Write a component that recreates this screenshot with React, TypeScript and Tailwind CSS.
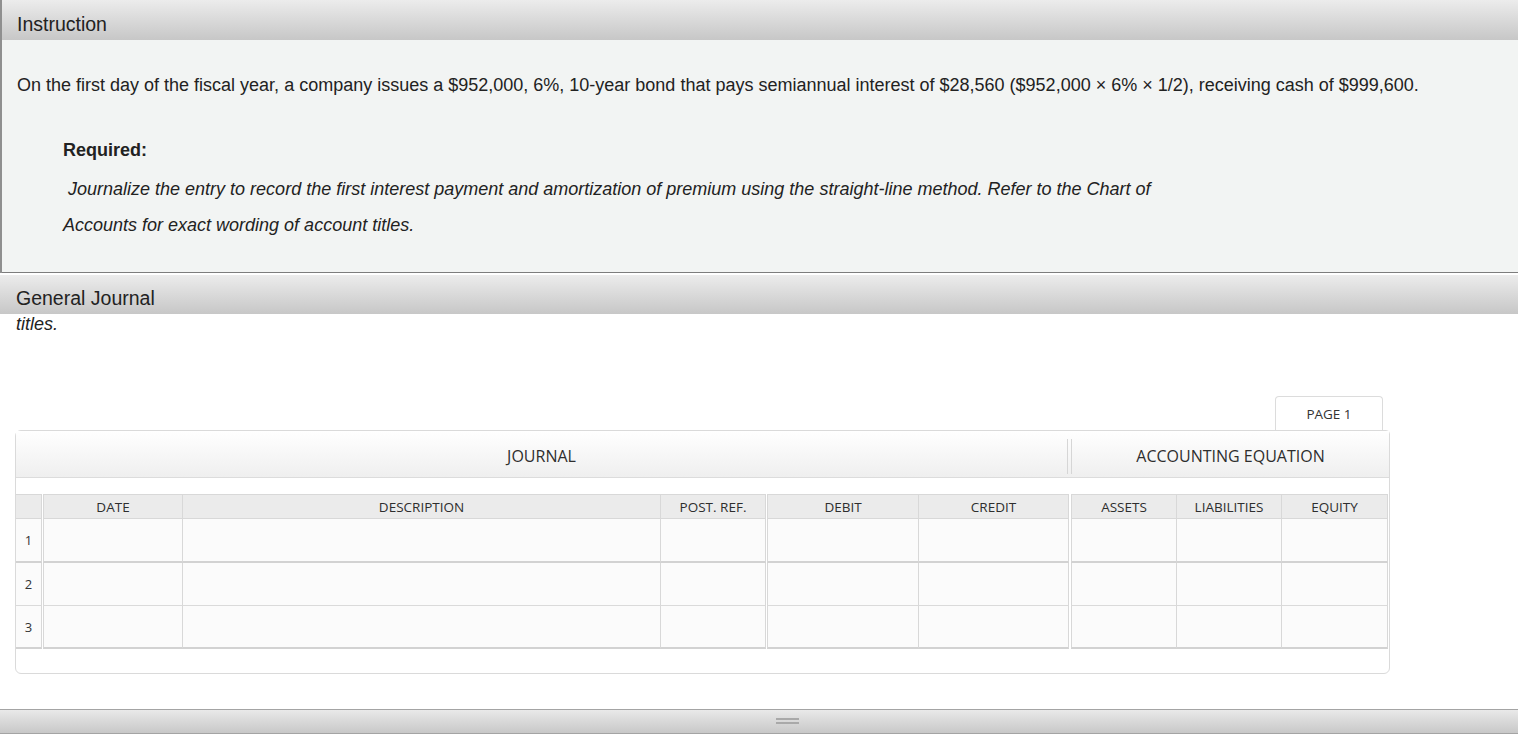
import type { ReactNode } from 'react';

const cellBorder = 'border-[#d8d8d8]';

function HeadCell({ w, children, first }: { w: string; children?: ReactNode; first?: boolean }) {
  return (
    <div
      className={`${w} h-[25px] flex items-center justify-center pt-[1px] border-t border-b border-r ${cellBorder} bg-[#ebebeb] text-[13.5px] text-[#2e2e2e] ${first ? 'border-l' : ''}`}
    >
      {children}
    </div>
  );
}

function BodyCell({ w, h, b, first, children }: { w: string; h: string; b: string; first?: boolean; children?: ReactNode }) {
  return (
    <div
      className={`${w} ${h} ${b} flex items-center justify-center pt-[2px] border-r ${cellBorder} bg-[#fbfbfb] text-[13px] text-[#333] ${first ? 'border-l' : ''}`}
    >
      {children}
    </div>
  );
}

const rows = [
  { n: 1, h: 'h-[44px]', b: 'border-b-2 border-b-[#d2d2d2]' },
  { n: 2, h: 'h-[43px]', b: 'border-b border-b-[#dadada]' },
  { n: 3, h: 'h-[43px]', b: 'border-b-2 border-b-[#d2d2d2]' },
];

function JournalTable() {
  return (
    <div className="font-['Open_Sans',sans-serif]">
      <div className="flex">
        <HeadCell w="w-[26px]" />
        <div className="w-px" />
        <HeadCell w="w-[140px]" first>DATE</HeadCell>
        <HeadCell w="w-[478px]">DESCRIPTION</HeadCell>
        <HeadCell w="w-[105px]">POST. REF.</HeadCell>
        <div className="w-px" />
        <HeadCell w="w-[152px]" first>DEBIT</HeadCell>
        <HeadCell w="w-[150px]">CREDIT</HeadCell>
        <div className="w-[2px]" />
        <HeadCell w="w-[106px]" first>ASSETS</HeadCell>
        <HeadCell w="w-[105px]">LIABILITIES</HeadCell>
        <HeadCell w="w-[106px]">EQUITY</HeadCell>
      </div>
      {rows.map((r) => (
        <div key={r.n} className="flex">
          <BodyCell w="w-[26px]" h={r.h} b={r.b}>{r.n}</BodyCell>
          <div className="w-px" />
          <BodyCell w="w-[140px]" h={r.h} b={r.b} first />
          <BodyCell w="w-[478px]" h={r.h} b={r.b} />
          <BodyCell w="w-[105px]" h={r.h} b={r.b} />
          <div className="w-px" />
          <BodyCell w="w-[152px]" h={r.h} b={r.b} first />
          <BodyCell w="w-[150px]" h={r.h} b={r.b} />
          <div className="w-[2px]" />
          <BodyCell w="w-[106px]" h={r.h} b={r.b} first />
          <BodyCell w="w-[105px]" h={r.h} b={r.b} />
          <BodyCell w="w-[106px]" h={r.h} b={r.b} />
        </div>
      ))}
    </div>
  );
}

export default function App() {
  return (
    <div className="w-[1518px] h-[741px] overflow-hidden bg-white font-['Liberation_Sans',Arial,sans-serif] text-[#222]">
      <section className="border-l-2 border-[#8f8f8f]">
        <div className="h-[40px] bg-linear-to-b from-[#ececec] to-[#c7c7c7] pl-[15px] pt-[15px] text-[19.5px] leading-[19px]">
          Instruction
        </div>
        <div className="h-[233px] border-b border-[#7d7d7d] bg-[#f2f4f3] pl-[15px] pt-[35px]">
          <p className="text-[18px] leading-[20px]">
            On the first day of the fiscal year, a company issues a $952,000, 6%, 10-year bond that pays semiannual
            interest of $28,560 ($952,000 × 6% × 1/2), receiving cash of $999,600.
          </p>
          <div className="ml-[46px]">
            <p className="mt-[45px] text-[18px] font-bold leading-[20px]">Required:</p>
            <p className="mt-[11px] text-[18px] italic leading-[36px]">
              {'\u00a0'}Journalize the entry to record the first interest payment and amortization of premium using the
              straight-line method. Refer to the Chart of
              <br />
              Accounts for exact wording of account titles.
            </p>
          </div>
        </div>
      </section>

      <div className="mt-[2px] h-[39px] bg-linear-to-b from-[#ececec] to-[#c7c7c7] pl-[16px] pt-[14px] text-[19.5px] leading-[19px]">
        General Journal
      </div>
      <p className="pl-[16px] text-[18px] italic leading-[20px]">titles.</p>

      <div className="mt-[62px] ml-[15px] w-[1375px]">
        <div className="flex justify-end pr-[7px]">
          <div className="flex h-[34px] w-[108px] items-center justify-center pt-[1px] rounded-t-[4px] border border-b-0 border-[#dcdcdc] bg-white font-['Open_Sans',sans-serif] text-[13.5px] text-[#333]">
            PAGE 1
          </div>
        </div>
        <div className="rounded-[6px] rounded-tr-[4px] border border-[#dadada] bg-white pb-[24px]">
          <div className="flex h-[47px] border-b border-[#dcdcdc] bg-linear-to-b from-white to-[#efefef] font-['Open_Sans',sans-serif] text-[16px] text-[#2e2e2e]">
            <div className="flex w-[1051px] items-center justify-center pt-[4px]">JOURNAL</div>
            <div className="mb-[3px] h-[35px] w-[5px] self-end border-x border-[#d6d6d6]" />
            <div className="flex flex-1 items-center justify-center pt-[4px]">ACCOUNTING EQUATION</div>
          </div>
          <div className="mt-[16px]">
            <JournalTable />
          </div>
        </div>
      </div>

      <div className="mt-[35px] flex h-[25px] border-y border-[#a4a4a4] bg-linear-to-b from-[#e9e9e9] to-[#c8c8c8]">
        <div className="ml-[776px] mt-[8px] flex w-[23px] flex-col gap-[2px]">
          <div className="h-[2px] bg-[#a9a9a9]" />
          <div className="h-[2px] bg-[#a9a9a9]" />
        </div>
      </div>
    </div>
  );
}
